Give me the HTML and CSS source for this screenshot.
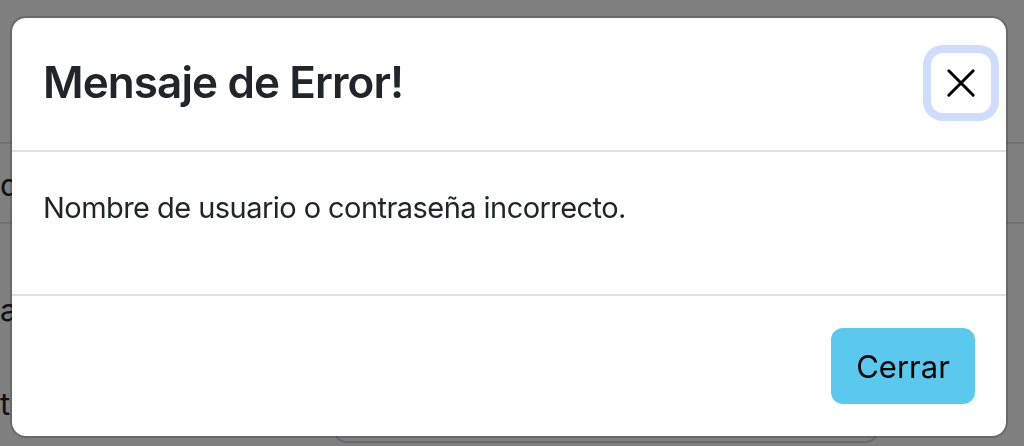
FILE: index.html
```html
<!DOCTYPE html>
<html lang="es">
<head>
<meta charset="utf-8">
<title>Mensaje de Error</title>
<link rel="stylesheet" href="styles.css">
</head>
<body>
<div class="page">
  <div class="page-top"></div>
  <div class="page-row row-1"><span class="peek">de</span></div>
  <div class="page-row row-2"><span class="peek">ai</span></div>
  <div class="page-row row-3">
    <span class="peek">tr</span>
    <div class="page-box"></div>
  </div>
</div>

<div class="backdrop">
  <div class="modal" role="dialog" aria-labelledby="modal-title">
    <div class="modal-header">
      <h4 class="modal-title" id="modal-title">Mensaje de Error!</h4>
      <button class="btn-close" type="button" aria-label="Close">
        <svg viewBox="0 0 16 16" width="30" height="30" aria-hidden="true">
          <path d="M1.5 1.5 L14.5 14.5 M14.5 1.5 L1.5 14.5" stroke="#000" stroke-width="1.6" stroke-linecap="round" fill="none"/>
        </svg>
      </button>
    </div>
    <div class="modal-body">
      <p>Nombre de usuario o contraseña incorrecto.</p>
    </div>
    <div class="modal-footer">
      <button class="btn-info" type="button">Cerrar</button>
    </div>
  </div>
</div>
</body>
</html>
```
FILE: styles.css
```css
* { box-sizing: border-box; }
html, body { margin: 0; padding: 0; }
body {
  width: 1024px;
  height: 446px;
  overflow: hidden;
  background: #fff;
  font-family: Inter, "Noto Sans", "Liberation Sans", sans-serif;
  color: #212529;
}

/* page behind the backdrop */
.page { display: flex; flex-direction: column; height: 446px; }
.page-top { height: 144px; border-bottom: 2px solid #dee2e6; flex: none; }
.page-row {
  display: flex;
  white-space: nowrap;
  font-size: 31px;
  line-height: 40px;
  flex: none;
}
.row-1 { height: 80px; align-items: center; padding-top: 4px; border-bottom: 2px solid #dee2e6; }
.row-2 { padding-top: 66px; height: 160px; }
.row-3 { padding-top: 0; align-items: flex-start; }
.page-box {
  width: 544px;
  height: 60px;
  margin: -1px 0 0 312px;
  border: 2px solid #ced4da;
  border-radius: 12px;
}

/* backdrop + modal */
.backdrop {
  position: fixed;
  inset: 0;
  background: rgba(0, 0, 0, 0.5);
  display: flex;
  align-items: flex-start;
}
.modal {
  margin: 16px 0 0 10px;
  width: 998px;
  background: #fff;
  background-clip: padding-box;
  border: 2px solid rgba(0, 0, 0, 0.175);
  border-radius: 16px;
  display: flex;
  flex-direction: column;
}
.modal-header {
  height: 134px;
  display: flex;
  align-items: center;
  justify-content: space-between;
  padding: 0 15px 0 31px;
  border-bottom: 2px solid #dee2e6;
}
.modal-title {
  margin: 0 0 4px;
  font-size: 44px;
  font-weight: 600;
  line-height: 1.2;
  letter-spacing: -0.9px;
  color: #212529;
}
.btn-close {
  width: 60px;
  height: 60px;
  margin-top: -3px;
  padding: 0;
  border: 0;
  background: transparent;
  border-radius: 12px;
  box-shadow: 0 0 0 8px #cfdcfb;
  display: flex;
  align-items: center;
  justify-content: center;
}
.modal-body {
  height: 144px;
  padding: 32px 31px;
  border-bottom: 2px solid #dee2e6;
}
.modal-body p {
  margin: 0;
  font-size: 29px;
  line-height: 48px;
  letter-spacing: -0.55px;
  color: #212529;
}
.modal-footer {
  height: 140px;
  display: flex;
  align-items: center;
  justify-content: flex-end;
  padding: 0 31px;
}
.btn-info {
  width: 144px;
  height: 76px;
  border: 0;
  border-radius: 12px;
  background: #5bc9ed;
  color: #000;
  font-family: Inter, "Noto Sans", "Liberation Sans", sans-serif;
  font-size: 31px;
  padding: 0;
}
```
